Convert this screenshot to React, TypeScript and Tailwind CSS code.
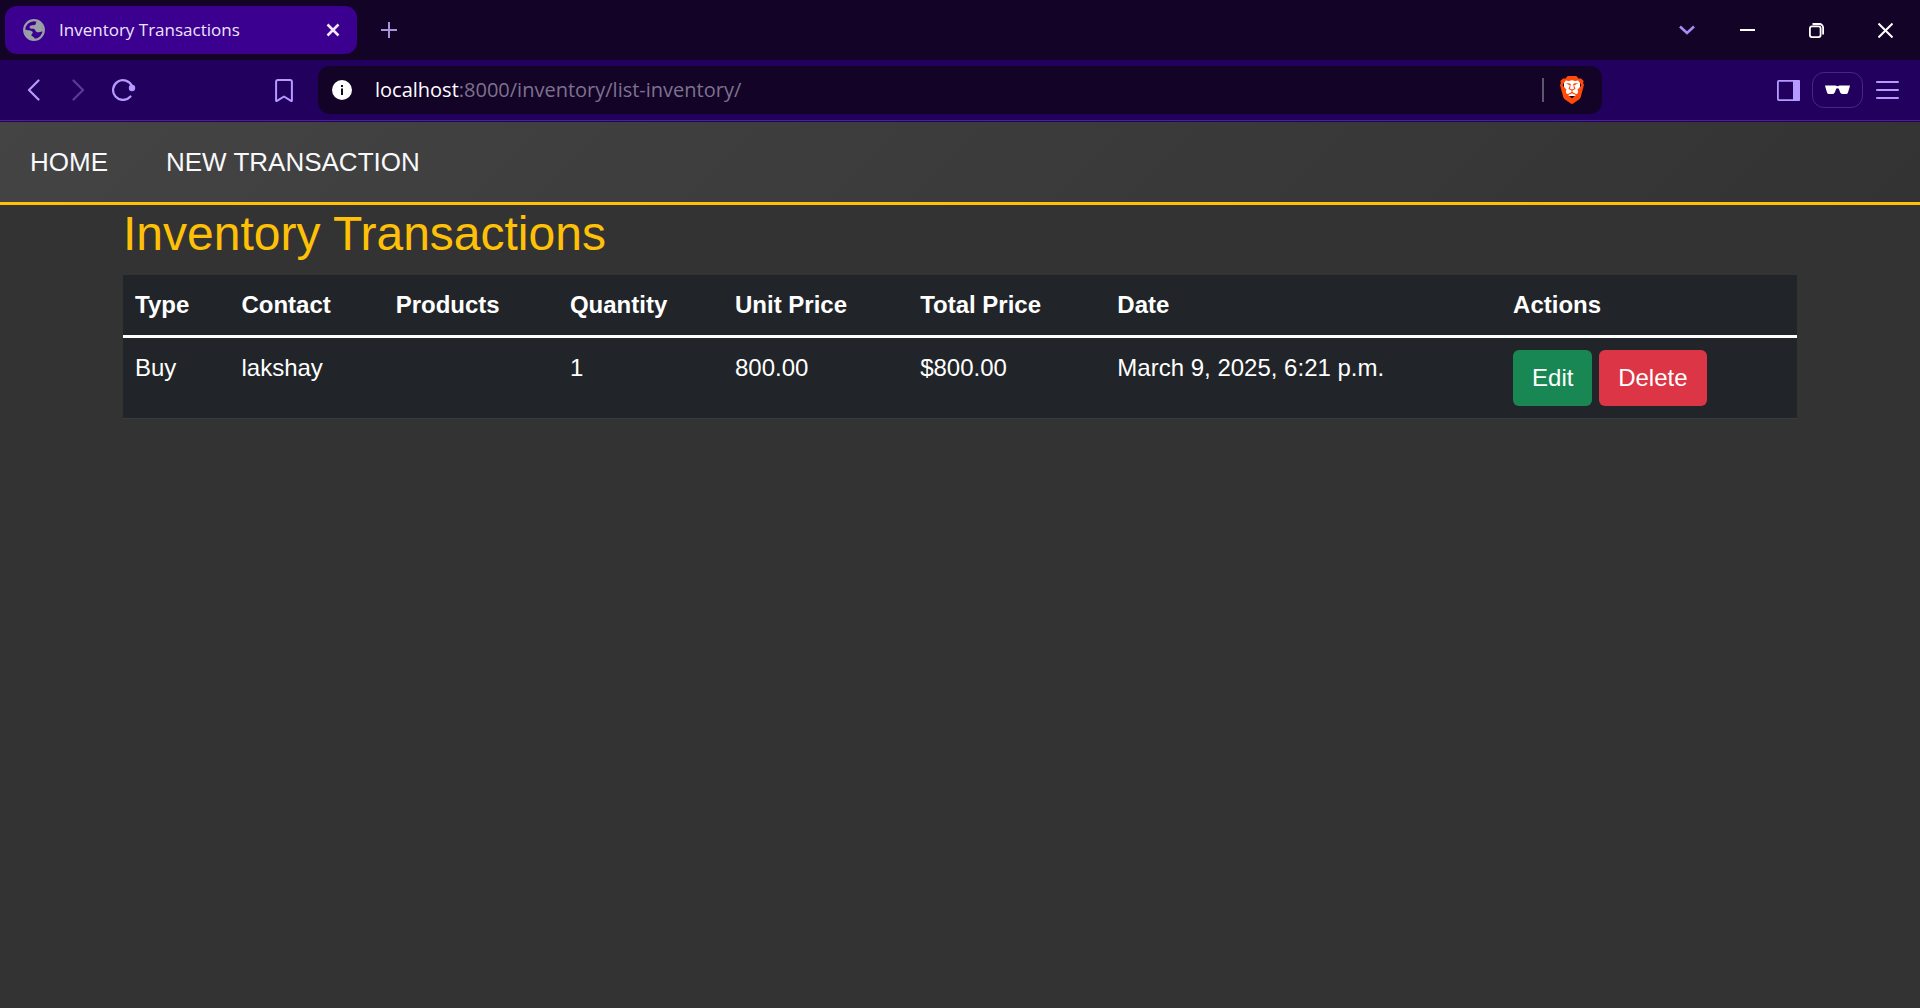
import type { ReactNode } from "react";
import { SiBrave } from "react-icons/si";

type IconProps = { w: number; h: number; className?: string; children: ReactNode };

function Icon({ w, h, className, children }: IconProps) {
  return (
    <svg width={w} height={h} viewBox={`0 0 ${w} ${h}`} fill="none" aria-hidden="true" className={className}>
      {children}
    </svg>
  );
}

function TabStrip() {
  return (
    <div className="flex h-[60px] items-center bg-[#130327] pl-[5px]">
      <div className="flex h-12 w-[352px] items-center rounded-xl bg-[#3b0090] pl-[18px] pr-[15px]">
        <Icon w={22} h={22}>
          <circle cx="11" cy="11" r="9.8" stroke="#9aa0a6" strokeWidth="2.2" />
          <path
            d="M13.5 2.500C12.500 3.500 13.500 5.500 11.500 6C9.500 6.500 7 6 6.500 8C6.500 10 9 9.800 10.500 9.800C12.500 10 12 12 13.500 13C15 13.800 17.500 12.500 20 12.500C20.500 6 17 3 13.500 2.500ZM2 10.500C4 11.500 8 11 9.500 12.800C10.500 14.500 8 15 8.500 16.500C9 18 12 17.500 11.500 20C6 20.500 2 17 2 10.500Z"
            fill="#9aa0a6"
          />
        </Icon>
        <span className="ml-[14px] grow text-[17px] leading-6 text-[#ece4ff]">Inventory Transactions</span>
        <button aria-label="Close tab" className="p-0.5">
          <Icon w={14} h={14}>
            <path d="M1.500 1.500 12.500 12.500M12.500 1.500 1.500 12.500" stroke="#f1eaff" strokeWidth="2.500" />
          </Icon>
        </button>
      </div>
      <button aria-label="New tab" className="ml-6">
        <Icon w={16} h={16}>
          <path d="M8 0V16M0 8H16" stroke="#a994da" strokeWidth="2" />
        </Icon>
      </button>
      <div className="ml-auto flex items-center">
        <button aria-label="Search tabs" className="mr-[45px]">
          <Icon w={16} h={10}>
            <path d="M1 1.500 8 8 15 1.500" stroke="#a88bf5" strokeWidth="2.600" />
          </Icon>
        </button>
        <button aria-label="Minimize" className="mr-[54px]">
          <Icon w={15} h={2}>
            <path d="M0 1H15" stroke="#fff" strokeWidth="2" />
          </Icon>
        </button>
        <button aria-label="Restore" className="mr-[54px]">
          <Icon w={15} h={15}>
            <rect x="0.900" y="3.400" width="10.700" height="10.700" rx="2" stroke="#fff" strokeWidth="1.800" />
            <path d="M3.500 1H10.500A3.600 3.600 0 0 1 14.100 4.600V11.500" stroke="#fff" strokeWidth="1.800" />
          </Icon>
        </button>
        <button aria-label="Close window" className="mr-[27px]">
          <Icon w={15} h={15}>
            <path d="M0.500 0.500 14.500 14.500M14.500 0.500 0.500 14.500" stroke="#fff" strokeWidth="2" />
          </Icon>
        </button>
      </div>
    </div>
  );
}

function Toolbar() {
  return (
    <div className="flex h-[60px] items-center bg-[#22005d]">
      <button aria-label="Back" className="ml-[27px]">
        <Icon w={13} h={22}>
          <path d="M11.500 1.500 2 11 11.500 20.500" stroke="#b69aff" strokeWidth="2.200" strokeLinecap="round" strokeLinejoin="round" />
        </Icon>
      </button>
      <button aria-label="Forward" className="ml-8">
        <Icon w={13} h={22}>
          <path d="M1.500 1.500 11 11 1.500 20.500" stroke="#5c3a98" strokeWidth="2.200" strokeLinecap="round" strokeLinejoin="round" />
        </Icon>
      </button>
      <button aria-label="Reload" className="ml-[27px]">
        <Icon w={24} h={22}>
          <path d="M18.500 17.500A9.900 9.900 0 1 1 20 7" stroke="#b69aff" strokeWidth="2.200" strokeLinecap="round" />
          <circle cx="20" cy="9" r="3.200" fill="#b69aff" />
        </Icon>
      </button>
      <button aria-label="Bookmark" className="ml-[139px]">
        <Icon w={18} h={23}>
          <path
            d="M3 1H15Q16.900 1 16.900 3V21.500Q16.900 22.300 16 21.800L9 17.500 2 21.800Q1.100 22.300 1.100 21.500V3Q1.100 1 3 1Z"
            stroke="#b69aff"
            strokeWidth="2"
            strokeLinejoin="round"
          />
        </Icon>
      </button>
      <div className="ml-[25px] mr-[175px] flex h-12 grow items-center rounded-xl bg-[#130327] pl-[14px] pr-[18px]">
        <Icon w={20} h={20}>
          <circle cx="10" cy="10" r="10" fill="#fff" />
          <path d="M9 5H11V7H9ZM9 8.500H11V15H9Z" fill="#130327" />
        </Icon>
        <a href="#" className="ml-[23px] grow text-xl leading-6 text-[#7d728e]">
          <span className="text-white">localhost</span>:8000/inventory/list-inventory/
        </a>
        <span className="h-6 w-0.5 bg-[#5f5770]" />
        <button aria-label="Brave Shields" className="relative ml-4 flex h-7 w-6 items-center justify-center">
          <span className="absolute inset-x-1 bottom-2 top-1 bg-white" />
          <SiBrave className="relative h-7 w-7 shrink-0 text-[#ff4a0a]" />
        </button>
      </div>
      <button aria-label="Sidebar">
        <Icon w={23} h={21}>
          <rect x="0.900" y="0.900" width="21.200" height="19.200" rx="1" stroke="#b69aff" strokeWidth="1.800" />
          <path d="M16 0H22Q23 0 23 1V20Q23 21 22 21H16Z" fill="#b69aff" />
        </Icon>
      </button>
      <button
        aria-label="Private window"
        className="ml-3 flex h-9 w-[51px] items-center justify-center rounded-xl border border-[#4a2589]"
      >
        <Icon w={25} h={10}>
          <path
            d="M0 0.500H10.500L12.500 1.200 14.500 0.500H25L24.500 2.500L23 7.500Q22.500 9 21 9H18Q16 9 15.200 7.500L13.800 3.800Q12.500 2.800 11.200 3.800L9.800 7.500Q9 9 7 9H4Q2.500 9 2 7.500L0.500 2.500Z"
            fill="#fff"
          />
        </Icon>
      </button>
      <button aria-label="Menu" className="ml-[13px] mr-[21px]">
        <Icon w={23} h={18}>
          <path d="M1 1H22M1 9H22M1 17H22" stroke="#b69aff" strokeWidth="2" strokeLinecap="round" />
        </Icon>
      </button>
    </div>
  );
}

const columns = ["Type", "Contact", "Products", "Quantity", "Unit Price", "Total Price", "Date", "Actions"];
const rows = [["Buy", "lakshay", "", "1", "800.00", "$800.00", "March 9, 2025, 6:21 p.m."]];

export default function App() {
  return (
    <div className="flex min-h-screen flex-col bg-[#333333] font-['Liberation_Sans',Arial,sans-serif]">
      <header className="border-b border-[#22005d] font-['Open_Sans','Noto_Sans',sans-serif]">
        <TabStrip />
        <div className="border-b border-[#4a2589]">
          <Toolbar />
        </div>
      </header>
      <nav className="flex h-[83px] items-center gap-[58px] border-b-3 border-[#ffc107] bg-linear-135 from-[#444444] to-[#333333] px-[30px] text-[26px] leading-9 text-[#f8f9fa]">
        <a href="#">HOME</a>
        <a href="#">NEW TRANSACTION</a>
      </nav>
      <main className="mx-auto w-full max-w-[1710px] px-[18px]">
        <h1 className="mb-3 text-5xl leading-[58px] text-[#ffc107]">Inventory Transactions</h1>
        <table className="w-full border-collapse bg-[#212529] text-left text-2xl leading-9 text-white">
          <thead>
            <tr className="border-b-3 border-white">
              {columns.map((name) => (
                <th key={name} scope="col" className="p-3 font-bold">
                  {name}
                </th>
              ))}
            </tr>
          </thead>
          <tbody>
            {rows.map((row) => (
              <tr key={row[6]} className="border-b border-[#373b3e] align-top">
                {row.map((cell, i) => (
                  <td key={columns[i]} className="p-3">
                    {cell}
                  </td>
                ))}
                <td className="p-3">
                  <button className="rounded-md bg-[#198754] px-[19px] py-2.5">Edit</button>{" "}
                  <button className="rounded-md bg-[#dc3545] px-[19px] py-2.5">Delete</button>
                </td>
              </tr>
            ))}
          </tbody>
        </table>
      </main>
    </div>
  );
}
